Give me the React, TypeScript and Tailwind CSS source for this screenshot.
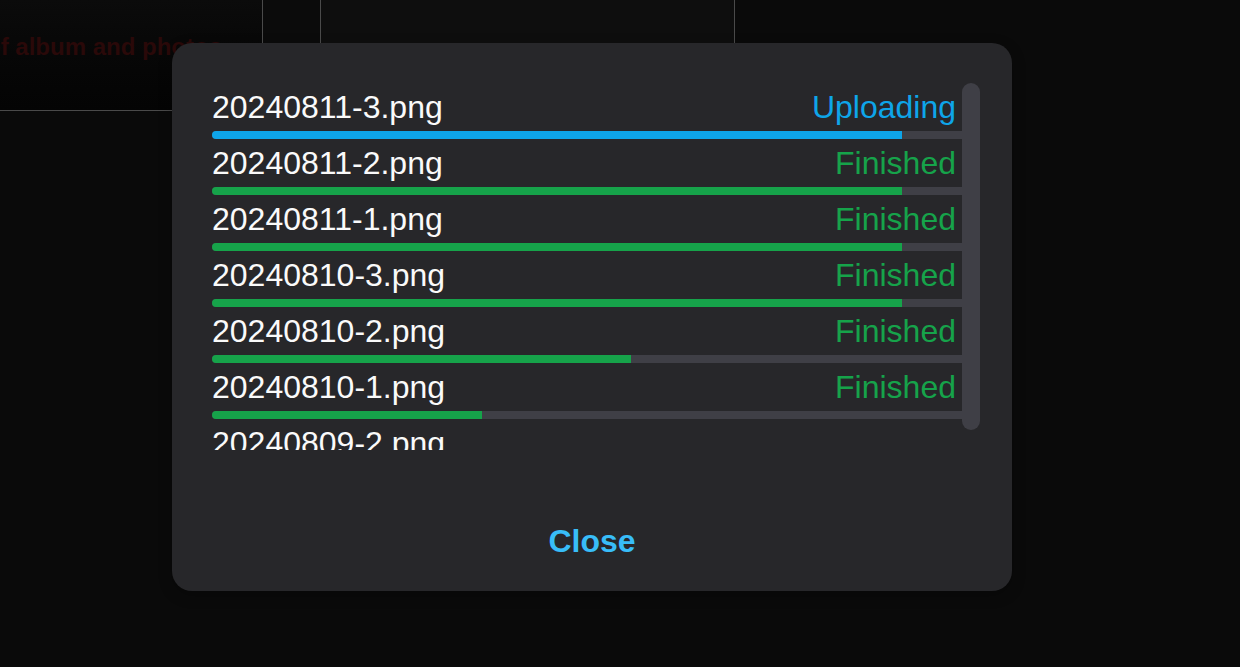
import { useState } from 'react';

interface UploadItem {
  name: string;
  status: 'Uploading' | 'Finished' | 'Waiting';
  progress: number;
}

const uploads: UploadItem[] = [
  { name: '20240811-3.png', status: 'Uploading', progress: 92 },
  { name: '20240811-2.png', status: 'Finished', progress: 92 },
  { name: '20240811-1.png', status: 'Finished', progress: 92 },
  { name: '20240810-3.png', status: 'Finished', progress: 92 },
  { name: '20240810-2.png', status: 'Finished', progress: 55.9 },
  { name: '20240810-1.png', status: 'Finished', progress: 36 },
  { name: '20240809-2.png', status: 'Waiting', progress: 0 },
];

const App = () => {
  const [open, setOpen] = useState(true);

  return (
    <div className="relative min-h-[667px] w-full overflow-hidden bg-[#0a0a0a] font-['Liberation_Sans',Arial,sans-serif]">
      {/* Page behind the overlay (dimmed) */}
      <div className="flex h-[111px] w-[735px] border-b border-[#4a4a4a]">
        <div className="flex w-[263px] items-start overflow-hidden border-r border-[#4a4a4a] bg-gradient-to-b from-[#0b0b0b] to-[#040404] pt-[29px]">
          <span className="-ml-[14px] whitespace-nowrap text-[24px] font-bold text-[#2a0909]">
            of album and photos
          </span>
        </div>
        <div className="w-[58px] border-r border-[#4a4a4a] bg-[#0b0b0b]" />
        <div className="flex-1 border-r border-[#4a4a4a] bg-[#0e0e0e]" />
      </div>

      {/* Upload dialog */}
      {open && (
        <div className="absolute left-[172px] top-[43px] flex h-[548px] w-[840px] flex-col rounded-[20px] bg-[#27272a] pl-10 pr-8 pt-10 shadow-[0_4px_14px_rgba(0,0,0,0.25)]">
          <div className="flex h-[367px]">
            <div className="h-[367px] w-[750px] overflow-hidden">
              {uploads.map(item => (
                <div key={item.name} className="flex flex-col">
                  <div className="flex h-12 items-center justify-between pr-[6px] text-[32px] leading-[48px]">
                    <span className="text-[#fafafa]">{item.name}</span>
                    {item.status !== 'Waiting' && (
                      <span className={item.status === 'Uploading' ? 'text-[#0ea5e9]' : 'text-[#16a34a]'}>
                        {item.status}
                      </span>
                    )}
                  </div>
                  <div className="h-2 w-full overflow-hidden rounded-l-full bg-[#3f3f46]">
                    <div
                      className={`h-full ${item.status === 'Uploading' ? 'bg-[#0ea5e9]' : 'bg-[#16a34a]'}`}
                      style={{ width: `${item.progress}%` }}
                    />
                  </div>
                </div>
              ))}
            </div>
            {/* scrollbar */}
            <div className="w-[18px]">
              <div className="h-[347px] w-full rounded-full bg-[#3f3f46]" />
            </div>
          </div>

          <div className="mt-[67px] flex justify-center pr-2">
            <button
              onClick={() => setOpen(false)}
              className="text-[32px] font-bold leading-[48px] text-[#38bdf8]"
            >
              Close
            </button>
          </div>
        </div>
      )}
    </div>
  );
};

export default App;
